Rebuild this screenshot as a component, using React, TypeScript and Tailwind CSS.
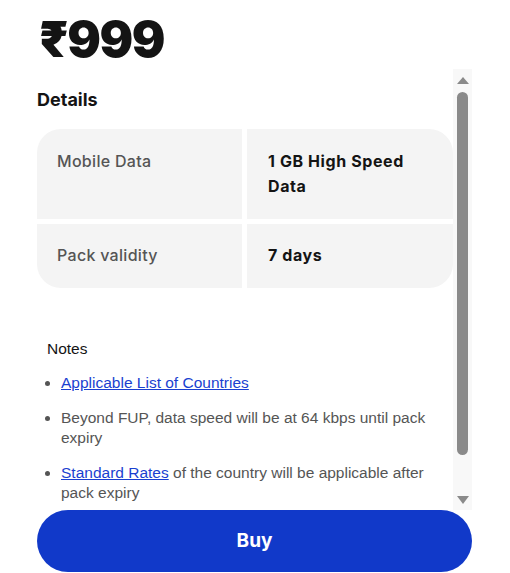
import React from 'react';

const rows = [
    { label: 'Mobile Data', value: '1 GB High Speed Data' },
    { label: 'Pack validity', value: '7 days' },
];

/** Fake scrollbar column drawn beside the details list. */
const ScrollBar: React.FC = () => (
    <div className="w-[19px] bg-[#f8f8f8] flex flex-col items-center shrink-0">
        <svg width="12" height="7" viewBox="0 0 12 7" className="mt-[8px]">
            <polygon points="6,0 12,7 0,7" fill="#8a8a8a" />
        </svg>
        <div className="w-[11px] h-[363px] mt-[8px] rounded-full bg-[#8a8a8a]" />
        <div className="flex-1" />
        <svg width="12" height="8" viewBox="0 0 12 8" className="mb-[6px]">
            <polygon points="0,0 12,0 6,8" fill="#8a8a8a" />
        </svg>
    </div>
);

const App: React.FC = () => {
    return (
        <div className="w-[510px] h-[573px] bg-white overflow-hidden font-['Inter',sans-serif]">
            <div className="pl-[37px] pr-[38px]">
                <div className="text-[50px] leading-[60px] font-black text-[#141414] tracking-[-1.5px] pl-[2px] pt-[9px]">₹999</div>
                <div className="flex h-[441px]">
                    <div className="flex-1 overflow-hidden">
                        <div className="text-[18px] font-bold text-[#141414] mt-[19px] leading-[24px]">Details</div>
                        <div className="mt-[17px] grid grid-cols-[205px_1fr] gap-[5px] text-[16px] leading-[25px]">
                            <div className="bg-[#f4f4f4] rounded-tl-[24px] px-[20px] pt-[20px] h-[90px] font-medium text-[#555] tracking-[0.3px]">{rows[0].label}</div>
                            <div className="bg-[#f4f4f4] rounded-tr-[24px] pl-[21px] pr-[24px] pt-[20px] h-[90px] font-bold text-[#141414] tracking-[0.6px]">{rows[0].value}</div>
                            <div className="bg-[#f4f4f4] rounded-bl-[24px] px-[20px] pt-[19px] h-[64px] font-medium text-[#555] tracking-[0.3px]">{rows[1].label}</div>
                            <div className="bg-[#f4f4f4] rounded-br-[24px] pl-[21px] pr-[24px] pt-[19px] h-[64px] font-bold text-[#141414] tracking-[0.6px]">{rows[1].value}</div>
                        </div>
                        <div className="mt-[51px] pl-[10px] font-['Liberation_Sans',Arial,sans-serif] text-[15.5px] leading-[20px]">
                            <div className="text-[#141414]">Notes</div>
                            <ul className="mt-[14px] list-disc pl-[14px] marker:text-[#555] text-[#555] flex flex-col gap-[15px] pr-[14px]">
                                <li><a href="#" className="text-[#1a3fd0] underline">Applicable List of Countries</a></li>
                                <li>Beyond FUP, data speed will be at 64 kbps until pack expiry</li>
                                <li><a href="#" className="text-[#1a3fd0] underline">Standard Rates</a> of the country will be applicable after pack expiry</li>
                            </ul>
                        </div>
                    </div>
                    <ScrollBar />
                </div>
                <button className="w-[435px] h-[62px] rounded-full bg-[#1139c9] text-white text-[19px] font-bold">Buy</button>
            </div>
        </div>
    );
};

export default App;
